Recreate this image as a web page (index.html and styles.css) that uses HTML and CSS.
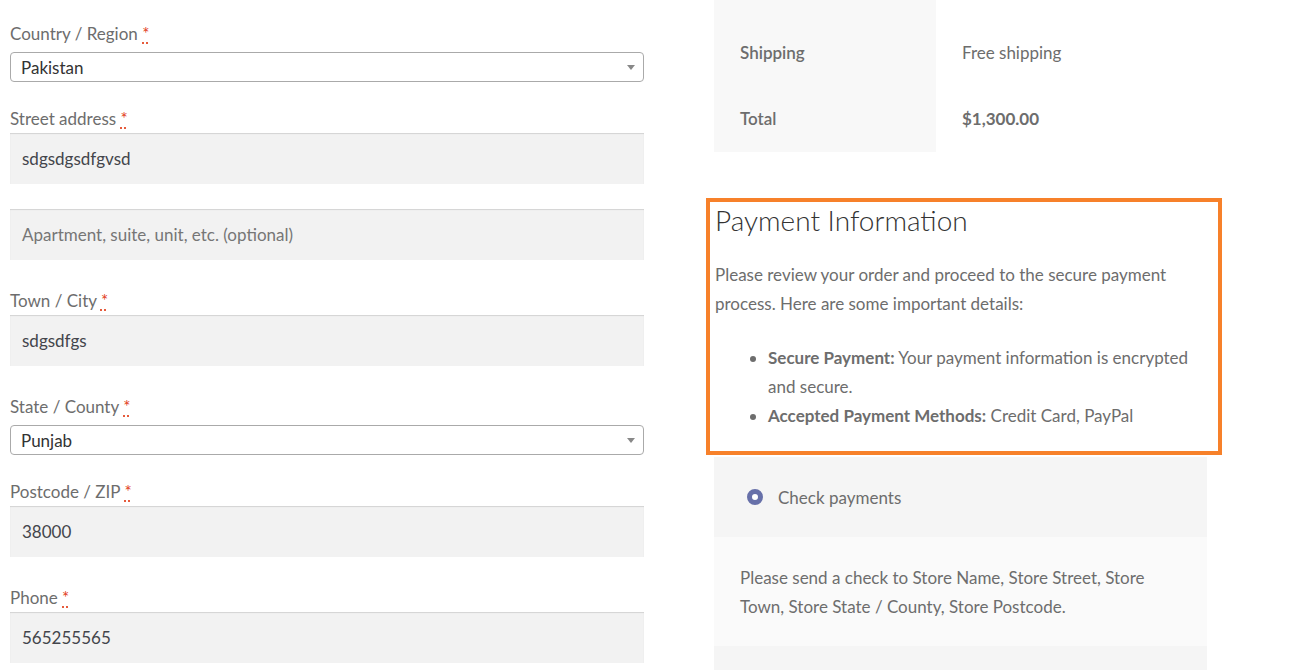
FILE: index.html
```html
<!DOCTYPE html>
<html lang="en">
<head>
    <meta charset="UTF-8">
    <meta name="viewport" content="width=device-width, initial-scale=1.0">
    <title>Checkout</title>
    <link rel="stylesheet" href="styles.css">
</head>
<body>
    <div class="checkout">
        <form class="billing">
            <div class="field field-select">
                <label>Country / Region <abbr class="required" title="required">*</abbr></label>
                <div class="select">Pakistan<span class="arrow"></span></div>
            </div>
            <div class="field">
                <label>Street address <abbr class="required" title="required">*</abbr></label>
                <div class="input">sdgsdgsdfgvsd</div>
            </div>
            <div class="field">
                <div class="input placeholder">Apartment, suite, unit, etc. (optional)</div>
            </div>
            <div class="field">
                <label>Town / City <abbr class="required" title="required">*</abbr></label>
                <div class="input">sdgsdfgs</div>
            </div>
            <div class="field field-select">
                <label>State / County <abbr class="required" title="required">*</abbr></label>
                <div class="select">Punjab<span class="arrow"></span></div>
            </div>
            <div class="field">
                <label>Postcode / ZIP <abbr class="required" title="required">*</abbr></label>
                <div class="input">38000</div>
            </div>
            <div class="field">
                <label>Phone <abbr class="required" title="required">*</abbr></label>
                <div class="input">565255565</div>
            </div>
        </form>

        <div class="review">
            <table class="totals">
                <tr class="first">
                    <th>Shipping</th>
                    <td>Free shipping</td>
                </tr>
                <tr>
                    <th>Total</th>
                    <td><strong>$1,300.00</strong></td>
                </tr>
            </table>

            <div class="payment-info">
                <h3>Payment Information</h3>
                <p>Please review your order and proceed to the secure payment process. Here are some important details:</p>
                <ul>
                    <li><strong>Secure Payment:</strong> Your payment information is encrypted and secure.</li>
                    <li><strong>Accepted Payment Methods:</strong> Credit Card, PayPal</li>
                </ul>
            </div>

            <div class="payment">
                <div class="method">
                    <span class="radio"></span>
                    <span>Check payments</span>
                </div>
                <div class="method-box">
                    Please send a check to Store Name, Store Street, Store Town, Store State / County, Store Postcode.
                </div>
                <div class="place-order"></div>
            </div>
        </div>
    </div>
</body>
</html>
```

FILE: styles.css
```css
body, html {
    margin: 0;
    padding: 0;
    height: 100%;
    font-family: Lato, "Open Sans", sans-serif;
    font-size: 17px;
    background-color: #fff;
    color: #6d6d6d;
    overflow: hidden;
}

.checkout {
    display: grid;
    grid-template-columns: 634px 493px;
    column-gap: 70px;
    padding: 0 10px;
}

/* billing form */

.billing {
    padding-top: 18px;
}

.field {
    margin-bottom: 25px;
}

.field-select {
    margin-bottom: 21px;
}

.field label {
    display: block;
    line-height: 24px;
    padding-top: 4px;
    margin-bottom: 2px;
}

.required {
    color: #e2401c;
    text-decoration: underline dotted;
    text-underline-offset: 3px;
}

.input {
    height: 51px;
    box-sizing: border-box;
    display: flex;
    align-items: center;
    padding: 0 12px;
    background-color: #f2f2f2;
    box-shadow: inset 0 1px 1px rgba(0, 0, 0, 0.13);
    color: #43454b;
}

.input.placeholder {
    color: #767676;
}

.select {
    position: relative;
    margin-top: 6px;
    height: 30px;
    box-sizing: border-box;
    display: flex;
    align-items: center;
    padding: 0 10px;
    border: 1px solid #aaa;
    border-radius: 4px;
    color: #333;
}

.arrow {
    position: absolute;
    right: 8px;
    top: 12px;
    border-left: 4px solid transparent;
    border-right: 4px solid transparent;
    border-top: 5px solid #888;
}

/* order review */

.totals {
    width: 100%;
    border-collapse: collapse;
}

.totals th,
.totals td {
    text-align: left;
    line-height: 24px;
    padding: 21px 26px;
}

.totals th {
    width: 170px;
    background-color: #f8f8f8;
    font-weight: 600;
}

.totals tr.first th,
.totals tr.first td {
    padding-top: 41px;
}

.payment-info {
    margin: 46px -15px 0 -8px;
    border: 4px solid #f7812a;
    padding: 0 6px 21px 5px;
}

.payment-info h3 {
    margin: 0;
    font-size: 28px;
    font-weight: 300;
    line-height: 36px;
    color: #333;
}

.payment-info p {
    margin: 22px 0 0;
    line-height: 29px;
}

.payment-info ul {
    margin: 25px 0 0;
    padding-left: 53px;
    line-height: 29px;
}

.payment {
    margin-top: 2px;
    background-color: #f5f5f5;
}

.method {
    display: flex;
    align-items: center;
    gap: 15px;
    height: 80px;
    padding-left: 33px;
}

.radio {
    width: 16px;
    height: 16px;
    box-sizing: border-box;
    border-radius: 50%;
    border: 5px solid #6770a9;
    background-color: #fff;
}

.method-box {
    background-color: #fafafa;
    padding: 26px 26px 25px;
    line-height: 29px;
}

.place-order {
    height: 60px;
}
```
